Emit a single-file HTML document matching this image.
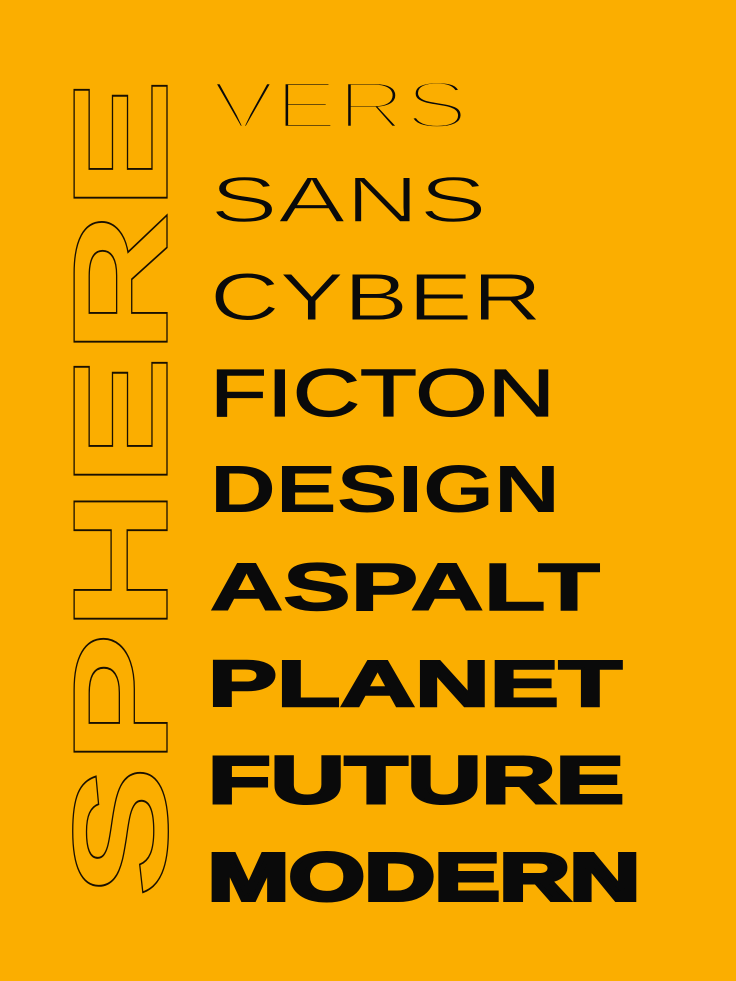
<!DOCTYPE html>
<html><head><meta charset="utf-8"><style>
html,body{margin:0;padding:0;background:#fbae00;}
svg{display:block}
text{font-family:"Liberation Sans",sans-serif;}
</style></head><body>
<svg width="736" height="981" viewBox="0 0 736 981" xmlns="http://www.w3.org/2000/svg">
<rect width="736" height="981" fill="#fbae00"/>
<g transform="translate(167,898) rotate(-90)">
<text x="0" y="0" font-size="135" font-weight="700" fill="none" stroke="#1a1000" stroke-width="1.3" textLength="820" lengthAdjust="spacingAndGlyphs">SPHERE</text>
</g>
<g fill="#0a0a0a">
<text x="212" y="128" font-size="67" font-weight="400" stroke="#fbae00" stroke-width="4.4" textLength="256" lengthAdjust="spacingAndGlyphs">VERS</text>
<text x="210" y="222" font-size="65" font-weight="400" stroke="#fbae00" stroke-width="1.6" textLength="277" lengthAdjust="spacingAndGlyphs">SANS</text>
<text x="210" y="320" font-size="67" font-weight="400" stroke="#fbae00" stroke-width="1" textLength="332" lengthAdjust="spacingAndGlyphs">CYBER</text>
<text x="210" y="416" font-size="67" font-weight="400" stroke="#0a0a0a" stroke-width="1.2" textLength="345" lengthAdjust="spacingAndGlyphs">FICTON</text>
<text x="210" y="512" font-size="67" font-weight="700" textLength="350" lengthAdjust="spacingAndGlyphs">DESIGN</text>
<text x="210" y="610" font-size="67" font-weight="700" stroke="#0a0a0a" stroke-width="1.5" textLength="390" lengthAdjust="spacingAndGlyphs">ASPALT</text>
<text x="208" y="706" font-size="65" font-weight="700" stroke="#0a0a0a" stroke-width="2.5" textLength="414" lengthAdjust="spacingAndGlyphs">PLANET</text>
<text x="208" y="803" font-size="67" font-weight="700" stroke="#0a0a0a" stroke-width="3" textLength="416" lengthAdjust="spacingAndGlyphs">FUTURE</text>
<text x="208" y="900" font-size="67" font-weight="700" stroke="#0a0a0a" stroke-width="4" textLength="432" lengthAdjust="spacingAndGlyphs">MODERN</text>
</g>
</svg>
</body></html>
